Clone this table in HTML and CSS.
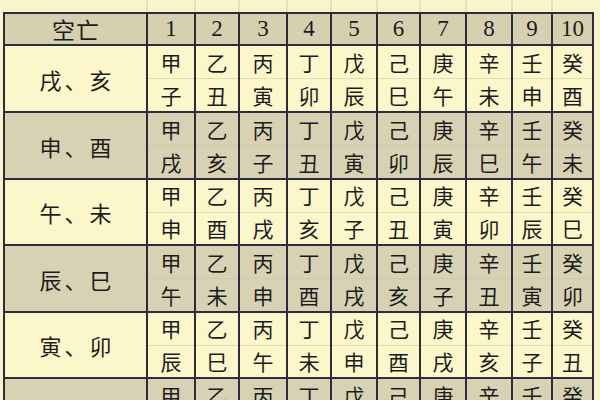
FILE: index.html
```html
<!DOCTYPE html>
<html lang="zh">
<head>
<meta charset="utf-8">
<title>空亡</title>
<link rel="stylesheet" href="styles.css">
</head>
<body>
<div class="sheet">
  <div class="strip">
    <div></div><div></div><div></div><div></div><div></div><div></div><div></div><div></div><div></div><div></div><div></div>
  </div>
  <div class="table">
    <div class="hd lab">空亡</div>
    <div class="hd num">1</div><div class="hd num">2</div><div class="hd num">3</div><div class="hd num">4</div><div class="hd num">5</div>
    <div class="hd num">6</div><div class="hd num">7</div><div class="hd num">8</div><div class="hd num">9</div><div class="hd num">10</div>

    <div class="lab light">戌、亥</div>
    <div class="cell light"><span>甲</span><span>子</span></div>
    <div class="cell light"><span>乙</span><span>丑</span></div>
    <div class="cell light"><span>丙</span><span>寅</span></div>
    <div class="cell light"><span>丁</span><span>卯</span></div>
    <div class="cell light"><span>戊</span><span>辰</span></div>
    <div class="cell light"><span>己</span><span>巳</span></div>
    <div class="cell light"><span>庚</span><span>午</span></div>
    <div class="cell light"><span>辛</span><span>未</span></div>
    <div class="cell light"><span>壬</span><span>申</span></div>
    <div class="cell light"><span>癸</span><span>酉</span></div>

    <div class="lab dark">申、酉</div>
    <div class="cell dark"><span>甲</span><span>戌</span></div>
    <div class="cell dark"><span>乙</span><span>亥</span></div>
    <div class="cell dark"><span>丙</span><span>子</span></div>
    <div class="cell dark"><span>丁</span><span>丑</span></div>
    <div class="cell dark"><span>戊</span><span>寅</span></div>
    <div class="cell dark"><span>己</span><span>卯</span></div>
    <div class="cell dark"><span>庚</span><span>辰</span></div>
    <div class="cell dark"><span>辛</span><span>巳</span></div>
    <div class="cell dark"><span>壬</span><span>午</span></div>
    <div class="cell dark"><span>癸</span><span>未</span></div>

    <div class="lab light">午、未</div>
    <div class="cell light"><span>甲</span><span>申</span></div>
    <div class="cell light"><span>乙</span><span>酉</span></div>
    <div class="cell light"><span>丙</span><span>戌</span></div>
    <div class="cell light"><span>丁</span><span>亥</span></div>
    <div class="cell light"><span>戊</span><span>子</span></div>
    <div class="cell light"><span>己</span><span>丑</span></div>
    <div class="cell light"><span>庚</span><span>寅</span></div>
    <div class="cell light"><span>辛</span><span>卯</span></div>
    <div class="cell light"><span>壬</span><span>辰</span></div>
    <div class="cell light"><span>癸</span><span>巳</span></div>

    <div class="lab dark">辰、巳</div>
    <div class="cell dark"><span>甲</span><span>午</span></div>
    <div class="cell dark"><span>乙</span><span>未</span></div>
    <div class="cell dark"><span>丙</span><span>申</span></div>
    <div class="cell dark"><span>丁</span><span>酉</span></div>
    <div class="cell dark"><span>戊</span><span>戌</span></div>
    <div class="cell dark"><span>己</span><span>亥</span></div>
    <div class="cell dark"><span>庚</span><span>子</span></div>
    <div class="cell dark"><span>辛</span><span>丑</span></div>
    <div class="cell dark"><span>壬</span><span>寅</span></div>
    <div class="cell dark"><span>癸</span><span>卯</span></div>

    <div class="lab light">寅、卯</div>
    <div class="cell light"><span>甲</span><span>辰</span></div>
    <div class="cell light"><span>乙</span><span>巳</span></div>
    <div class="cell light"><span>丙</span><span>午</span></div>
    <div class="cell light"><span>丁</span><span>未</span></div>
    <div class="cell light"><span>戊</span><span>申</span></div>
    <div class="cell light"><span>己</span><span>酉</span></div>
    <div class="cell light"><span>庚</span><span>戌</span></div>
    <div class="cell light"><span>辛</span><span>亥</span></div>
    <div class="cell light"><span>壬</span><span>子</span></div>
    <div class="cell light"><span>癸</span><span>丑</span></div>

    <div class="lab dark">子、丑</div>
    <div class="cell dark"><span>甲</span><span>寅</span></div>
    <div class="cell dark"><span>乙</span><span>卯</span></div>
    <div class="cell dark"><span>丙</span><span>辰</span></div>
    <div class="cell dark"><span>丁</span><span>巳</span></div>
    <div class="cell dark"><span>戊</span><span>午</span></div>
    <div class="cell dark"><span>己</span><span>未</span></div>
    <div class="cell dark"><span>庚</span><span>申</span></div>
    <div class="cell dark"><span>辛</span><span>酉</span></div>
    <div class="cell dark"><span>壬</span><span>戌</span></div>
    <div class="cell dark"><span>癸</span><span>亥</span></div>
  </div>
</div>
</body>
</html>
```
FILE: styles.css
```css
html, body {
  margin: 0;
  padding: 0;
  width: 600px;
  height: 400px;
  overflow: hidden;
  background: #faf4ca;
}

.sheet {
  display: flex;
  flex-direction: column;
  font-family: "Noto Sans CJK SC", sans-serif;
  color: #1c1c1c;
}

.strip {
  display: grid;
  grid-template-columns: 141px 46px 42px 46px 42px 44px 41px 44px 44px 38px 39px;
  column-gap: 2px;
  height: 12px;
  margin-left: 5px;
  width: max-content;
  background: #e6e0b8;
}

.strip div {
  background: #faf4ca;
}

.table {
  display: grid;
  grid-template-columns: 141px 46px 42px 46px 42px 44px 41px 44px 44px 38px 39px;
  grid-template-rows: 30px 65px 65px 64px 65px 64px 65px;
  gap: 2px;
  margin-left: 3px;
  width: max-content;
  border: 2px solid #2c2c3c;
  background: #2c2c3c;
}

.hd {
  background: #d6d0b1;
  display: flex;
  align-items: center;
  justify-content: center;
}

.hd.lab {
  font-size: 23px;
  letter-spacing: 1px;
  padding-left: 1px;
}

.num {
  font-family: "Liberation Serif", serif;
  font-size: 23px;
}

.light {
  background: #fcf6cb;
}

.dark {
  background: #d8d2b4;
}

.lab {
  display: flex;
  align-items: center;
  justify-content: center;
  font-size: 22px;
  letter-spacing: 3px;
  padding-left: 3px;
}

.cell {
  display: flex;
  flex-direction: column;
  font-size: 21px;
}

.cell span {
  flex: 1;
  display: flex;
  align-items: center;
  justify-content: center;
  line-height: 1;
}

.cell.light span:first-child {
  border-bottom: 1px solid #e4ddb3;
}

.cell.dark span:first-child {
  border-bottom: 1px solid #cfc9aa;
}
```
